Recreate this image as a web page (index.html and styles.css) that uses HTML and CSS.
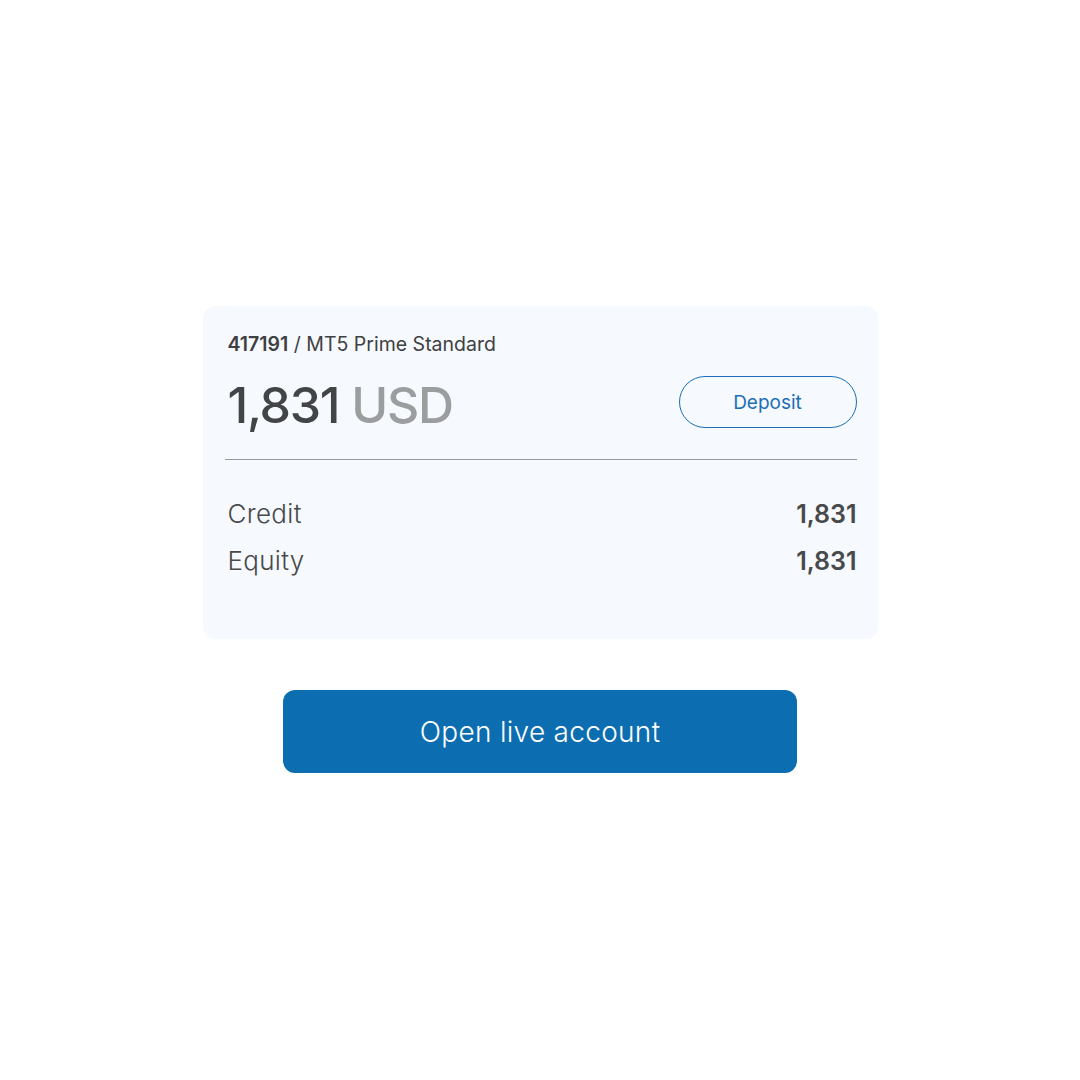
FILE: index.html
```html
<!DOCTYPE html>
<html lang="en">
<head>
  <meta charset="UTF-8">
  <meta name="viewport" content="width=device-width, initial-scale=1.0">
  <title>Account</title>
  <link rel="stylesheet" href="styles.css">
</head>
<body>
  <main class="page">
    <!-- Account card -->
    <section class="account-card">
      <div class="account-name"><strong>417191</strong> / MT5 Prime Standard</div>

      <div class="account-head">
        <div class="balance">1,831 <span class="currency">USD</span></div>
        <button class="deposit-btn">Deposit</button>
      </div>

      <div class="divider"></div>

      <ul class="stats">
        <li><span>Credit</span><strong>1,831</strong></li>
        <li><span>Equity</span><strong>1,831</strong></li>
      </ul>
    </section>

    <button class="open-btn">Open live account</button>
  </main>
</body>
</html>
```

FILE: styles.css
```css
/* Reset */
* {
  margin: 0;
  padding: 0;
  box-sizing: border-box;
}

body {
  font-family: Inter, 'Noto Sans', sans-serif;
  background-color: #ffffff;
  color: #444546;
  height: 100vh;
}

.page {
  display: flex;
  flex-direction: column;
  align-items: center;
  padding-top: 306px;
}

/* Card */
.account-card {
  width: 675px;
  background-color: #f6f9fd;
  border-radius: 12px;
  padding: 26px 21px 60px 22px;
}

.account-name {
  font-size: 19.5px;
  line-height: 24px;
  padding-left: 3px;
  color: #3f4042;
}

.account-name strong {
  font-weight: 600;
}

.account-head {
  display: flex;
  justify-content: space-between;
  align-items: flex-start;
  margin-top: 20px;
}

.balance {
  font-size: 50px;
  font-weight: 500;
  line-height: 58px;
  padding-left: 3px;
  color: #434446;
  letter-spacing: -1.3px;
}

.currency {
  color: #9c9d9f;
}

.deposit-btn {
  width: 178px;
  height: 52px;
  border: 1.5px solid #1b6fb6;
  border-radius: 26px;
  background: transparent;
  color: #1b6fb6;
  font-family: inherit;
  font-size: 19px;
}

.divider {
  height: 1px;
  background-color: #97999c;
  margin-top: 25px;
}

.stats {
  list-style: none;
  margin-top: 36px;
}

.stats li {
  display: flex;
  justify-content: space-between;
  font-size: 26px;
  line-height: 36px;
  padding-left: 3px;
  margin-bottom: 11px;
}

.stats li:last-child {
  margin-bottom: 0;
}

.stats span {
  font-weight: 300;
  color: #48494b;
  letter-spacing: 0.3px;
}

.stats strong {
  font-weight: 600;
  font-size: 25px;
  color: #48494b;
}

/* Main button */
.open-btn {
  margin-top: 51px;
  width: 514px;
  height: 83px;
  border: none;
  border-radius: 12px;
  background-color: #0c6eb0;
  color: #ffffff;
  font-family: inherit;
  font-size: 28px;
  font-weight: 300;
  letter-spacing: 0.3px;
}
```
